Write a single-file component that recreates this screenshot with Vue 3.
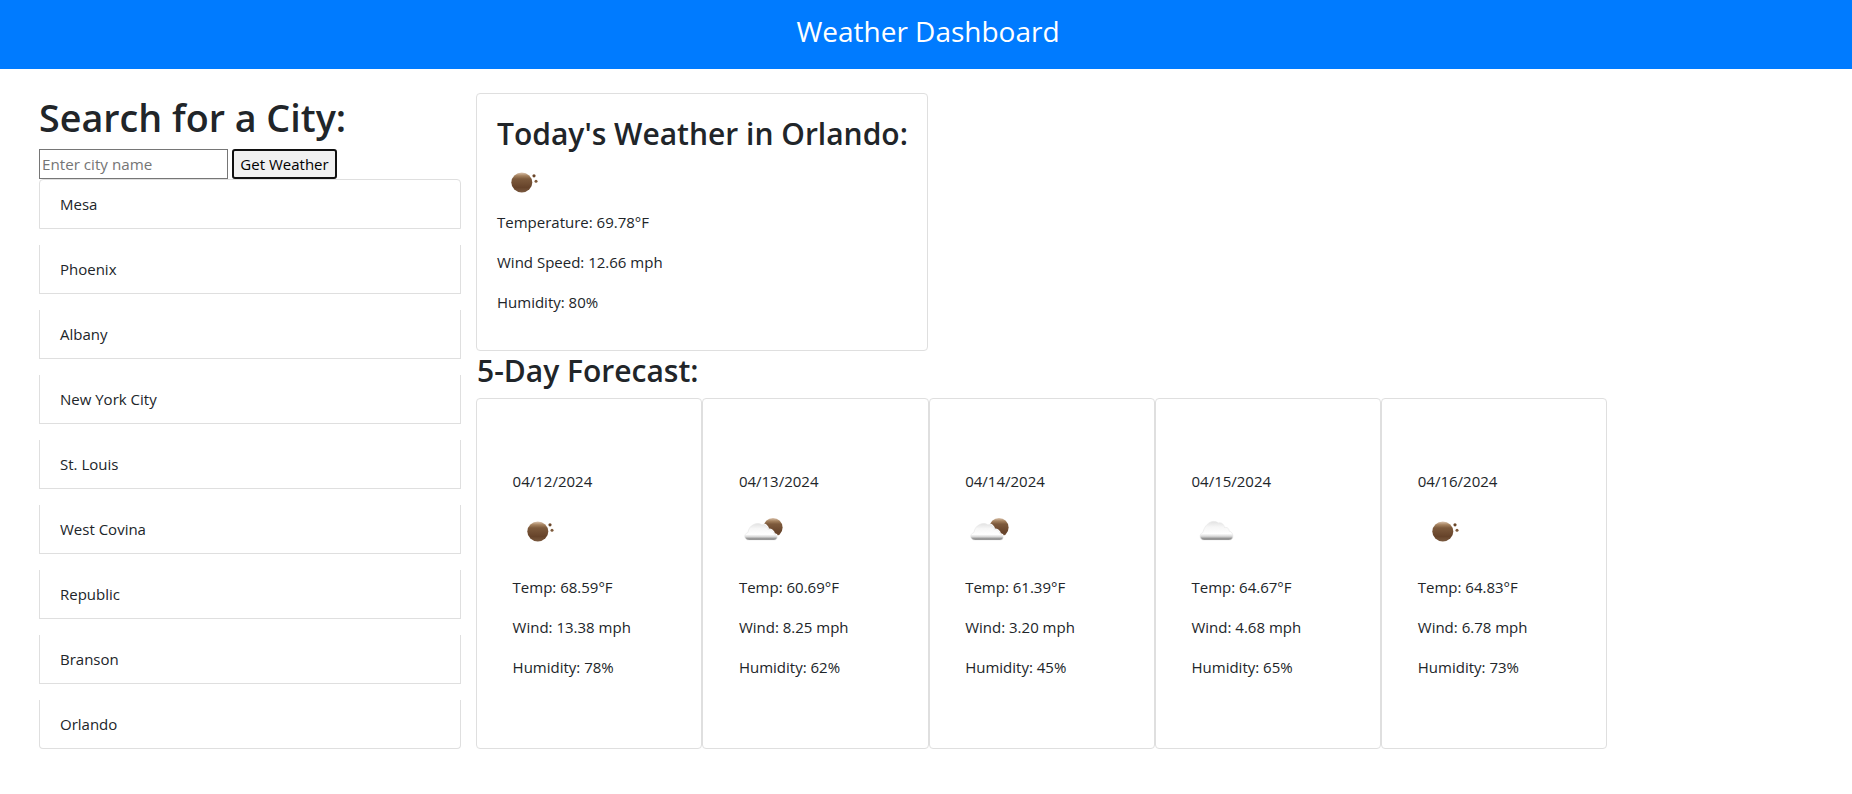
<template>
  <div class="app">
    <header class="top-bar">Weather Dashboard</header>
    <div class="page">
      <!-- left column -->
      <aside class="sidebar">
        <h1 class="search-title">Search for a City:</h1>
        <div class="search-form">
          <input class="city-input" type="text" placeholder="Enter city name" />
          <button class="search-btn">Get Weather</button>
        </div>
        <ul class="city-list">
          <li v-for="city in cities" :key="city" class="city-item">{{ city }}</li>
        </ul>
      </aside>

      <!-- right column -->
      <main class="content">
        <section class="card today">
          <h2 class="heading">Today's Weather in Orlando:</h2>
          <svg class="icon" viewBox="0 0 50 50" width="50" height="50">
            <use href="#moon-clear" />
          </svg>
          <p>Temperature: 69.78°F</p>
          <p>Wind Speed: 12.66 mph</p>
          <p>Humidity: 80%</p>
        </section>

        <h2 class="heading forecast-title">5-Day Forecast:</h2>
        <div class="forecast">
          <div v-for="day in forecast" :key="day.date" class="card day">
            <p>{{ day.date }}</p>
            <svg class="icon" viewBox="0 0 50 50" width="50" height="50">
              <use :href="'#' + day.icon" />
            </svg>
            <p>Temp: {{ day.temp }}°F</p>
            <p>Wind: {{ day.wind }} mph</p>
            <p>Humidity: {{ day.humidity }}%</p>
          </div>
        </div>
      </main>
    </div>

    <!-- weather icons -->
    <svg class="defs" width="0" height="0">
      <defs>
        <linearGradient id="moonBody" x1="0" y1="0" x2="0" y2="1">
          <stop offset="0" stop-color="#dcc5b0" />
          <stop offset="0.16" stop-color="#a5825f" />
          <stop offset="0.32" stop-color="#7d5a3c" />
          <stop offset="0.75" stop-color="#66432a" />
          <stop offset="1" stop-color="#7a5a40" />
        </linearGradient>
        <linearGradient id="cloudBody" x1="0" y1="0" x2="0" y2="1">
          <stop offset="0" stop-color="#e2e2e2" />
          <stop offset="0.3" stop-color="#f6f6f6" />
          <stop offset="0.66" stop-color="#ffffff" />
          <stop offset="0.8" stop-color="#d8d8d8" />
          <stop offset="1" stop-color="#666666" />
        </linearGradient>
        <symbol id="moon-clear" viewBox="0 0 50 50">
          <ellipse cx="24.8" cy="22.5" rx="10.5" ry="10" fill="url(#moonBody)" />
          <circle cx="37" cy="15.8" r="1.6" fill="#6a4629" />
          <circle cx="39" cy="21.3" r="1.5" fill="#7d5a3c" />
        </symbol>
        <symbol id="moon-cloud" viewBox="0 0 50 50">
          <circle cx="34" cy="18.5" r="9.6" fill="url(#moonBody)" />
          <path d="M10 31 C5 31 4 25 9 23.5 C9.5 16.5 18 12 23 16 C26 14.5 29 17.5 29 20.5 C32 20 35 22 35 25 C39 25.5 39.5 31 35 31 Z" fill="#fff" stroke="#fff" stroke-width="2" />
          <path d="M10 31 C5 31 4 25 9 23.5 C9.5 16.5 18 12 23 16 C26 14.5 29 17.5 29 20.5 C32 20 35 22 35 25 C39 25.5 39.5 31 35 31 Z" fill="url(#cloudBody)" stroke="#e6e6e6" stroke-width="0.6" />
        </symbol>
        <symbol id="cloud" viewBox="0 0 50 50">
          <path d="M13 31 C8.5 31 7.5 25 12 23.5 C13 17 20 9 27.5 14 C31 13 33 16 33.5 18.5 C37 18 38 20 38 22 C42.5 22.5 44 31 38 31 Z" fill="url(#cloudBody)" stroke="#e6e6e6" stroke-width="0.6" />
        </symbol>
      </defs>
    </svg>
  </div>
</template>

<script setup>
const cities = [
  'Mesa',
  'Phoenix',
  'Albany',
  'New York City',
  'St. Louis',
  'West Covina',
  'Republic',
  'Branson',
  'Orlando'
]

const forecast = [
  { date: '04/12/2024', icon: 'moon-clear', temp: '68.59', wind: '13.38', humidity: 78 },
  { date: '04/13/2024', icon: 'moon-cloud', temp: '60.69', wind: '8.25', humidity: 62 },
  { date: '04/14/2024', icon: 'moon-cloud', temp: '61.39', wind: '3.20', humidity: 45 },
  { date: '04/15/2024', icon: 'cloud', temp: '64.67', wind: '4.68', humidity: 65 },
  { date: '04/16/2024', icon: 'moon-clear', temp: '64.83', wind: '6.78', humidity: 73 }
]
</script>

<style>
body {
  background: #fff;
}
</style>

<style scoped>
.app {
  font-family: 'Open Sans', 'Noto Sans', sans-serif;
  font-size: 15px;
  line-height: 24px;
  color: #212529;
}

.top-bar {
  height: 69px;
  padding-left: 4px;
  background: #007bff;
  color: #fff;
  font-size: 28px;
  line-height: 63px;
  text-align: center;
}

.page {
  display: flex;
  gap: 15px;
  padding: 24px 0 0 39px;
}

.sidebar {
  width: 422px;
  flex-shrink: 0;
}

.search-title {
  margin: 0 0 8px;
  padding-top: 1px;
  font-size: 37.7px;
  font-weight: 600;
  line-height: 47px;
}

.search-form {
  display: flex;
  gap: 4px;
  height: 30px;
}

.city-input {
  width: 189px;
  box-sizing: border-box;
  padding: 1px 2px;
  border: 1px solid #767676;
  font-family: inherit;
  font-size: 15.2px;
}

.city-input::placeholder {
  color: #757575;
}

.search-btn {
  width: 105px;
  padding: 0;
  border: 2px solid #101010;
  border-radius: 3px;
  background: #f0f0f0;
  color: #000;
  font-family: inherit;
  font-size: 15px;
}

.city-list {
  margin: 0;
  padding: 0;
  list-style: none;
}

.city-item {
  margin-bottom: 16px;
  padding: 12px 20px;
  background: #fff;
  border: 1px solid #dfdfdf;
}

.city-item + .city-item {
  border-top-width: 0;
}

.city-item:first-child {
  border-radius: 4px 4px 0 0;
}

.city-item:last-child {
  border-radius: 0 0 4px 4px;
}

.content {
  flex: 1;
  display: flex;
  flex-direction: column;
  margin-bottom: 16px;
}

.card {
  box-sizing: border-box;
  border: 1px solid #dfdfdf;
  border-radius: 4px;
  background: #fff;
}

.card p {
  margin: 0 0 16px;
}

.heading {
  margin: 0 0 8px;
  padding-top: 1px;
  font-size: 30px;
  font-weight: 600;
  line-height: 37.4px;
  white-space: nowrap;
}

.today {
  width: 452px;
  padding: 20px;
}

.forecast-title {
  padding-left: 1px;
}

.forecast {
  flex: 1;
  display: flex;
}

.day {
  width: 226.3px;
  padding: 70px 20px 0 35.6px;
}

.icon {
  display: block;
  margin-bottom: 16px;
}

.today .icon {
  margin-bottom: 0;
}

.defs {
  position: absolute;
}
</style>
